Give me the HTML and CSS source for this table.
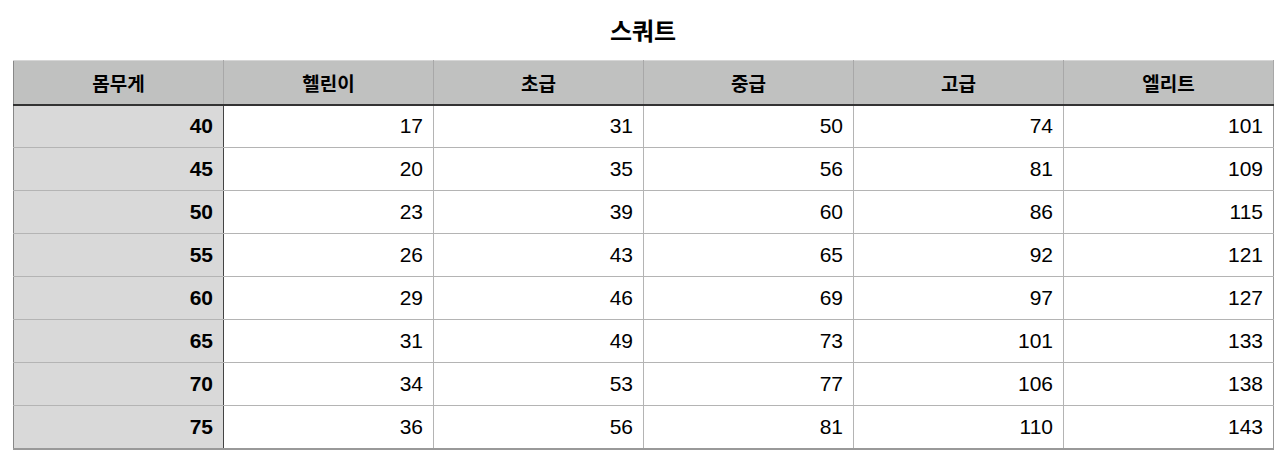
FILE: index.html
```html
<!DOCTYPE html>
<html lang="ko">
<head>
<meta charset="utf-8">
<link rel="stylesheet" href="styles.css">
</head>
<body>
<h1 class="title">스쿼트</h1>
<table class="grid">
  <thead>
    <tr><th>몸무게</th><th>헬린이</th><th>초급</th><th>중급</th><th>고급</th><th>엘리트</th></tr>
  </thead>
  <tbody>
    <tr><th>40</th><td>17</td><td>31</td><td>50</td><td>74</td><td>101</td></tr>
    <tr><th>45</th><td>20</td><td>35</td><td>56</td><td>81</td><td>109</td></tr>
    <tr><th>50</th><td>23</td><td>39</td><td>60</td><td>86</td><td>115</td></tr>
    <tr><th>55</th><td>26</td><td>43</td><td>65</td><td>92</td><td>121</td></tr>
    <tr><th>60</th><td>29</td><td>46</td><td>69</td><td>97</td><td>127</td></tr>
    <tr><th>65</th><td>31</td><td>49</td><td>73</td><td>101</td><td>133</td></tr>
    <tr><th>70</th><td>34</td><td>53</td><td>77</td><td>106</td><td>138</td></tr>
    <tr><th>75</th><td>36</td><td>56</td><td>81</td><td>110</td><td>143</td></tr>
  </tbody>
</table>
</body>
</html>
```
FILE: styles.css
```css
html, body {
  margin: 0;
  padding: 0;
  background: #ffffff;
}
body {
  font-family: "Liberation Sans", "Noto Sans CJK KR", sans-serif;
  color: #000;
  padding: 0 7px 0 13px;
}
.title {
  margin: 0;
  height: 60px;
  line-height: 60px;
  text-align: center;
  font-size: 24px;
  font-weight: bold;
  font-family: "Noto Sans CJK KR", sans-serif;
}
.grid {
  border-collapse: collapse;
  table-layout: fixed;
  width: 1260px;
}
.grid th, .grid td {
  width: 210px;
  box-sizing: border-box;
  padding: 0 10px;
  font-size: 21px;
}
.grid thead th {
  height: 44px;
  background: #c0c1c0;
  font-family: "Noto Sans CJK KR", sans-serif;
  font-weight: bold;
  font-size: 19px;
  text-align: center;
  border-top: 1px solid #d6d6d6;
  border-left: 1px solid #a8a8a8;
  border-right: 1px solid #a8a8a8;
  border-bottom: 2px solid #333;
}
.grid thead th:first-child {
  border-left: 1px solid #888;
}
.grid tbody td, .grid tbody th {
  height: 43px;
  text-align: right;
  border: 1px solid #b4b4b4;
}
.grid tbody td {
  font-weight: normal;
}
.grid tbody th {
  background: #d9d9d9;
  font-weight: bold;
  border-left: 1px solid #888;
  border-right: 1px solid #444;
}
.grid tbody tr:last-child td, .grid tbody tr:last-child th {
  border-bottom: 2px solid #999;
}
.grid tbody td:last-child {
  border-right: 1px solid #999;
}
```
